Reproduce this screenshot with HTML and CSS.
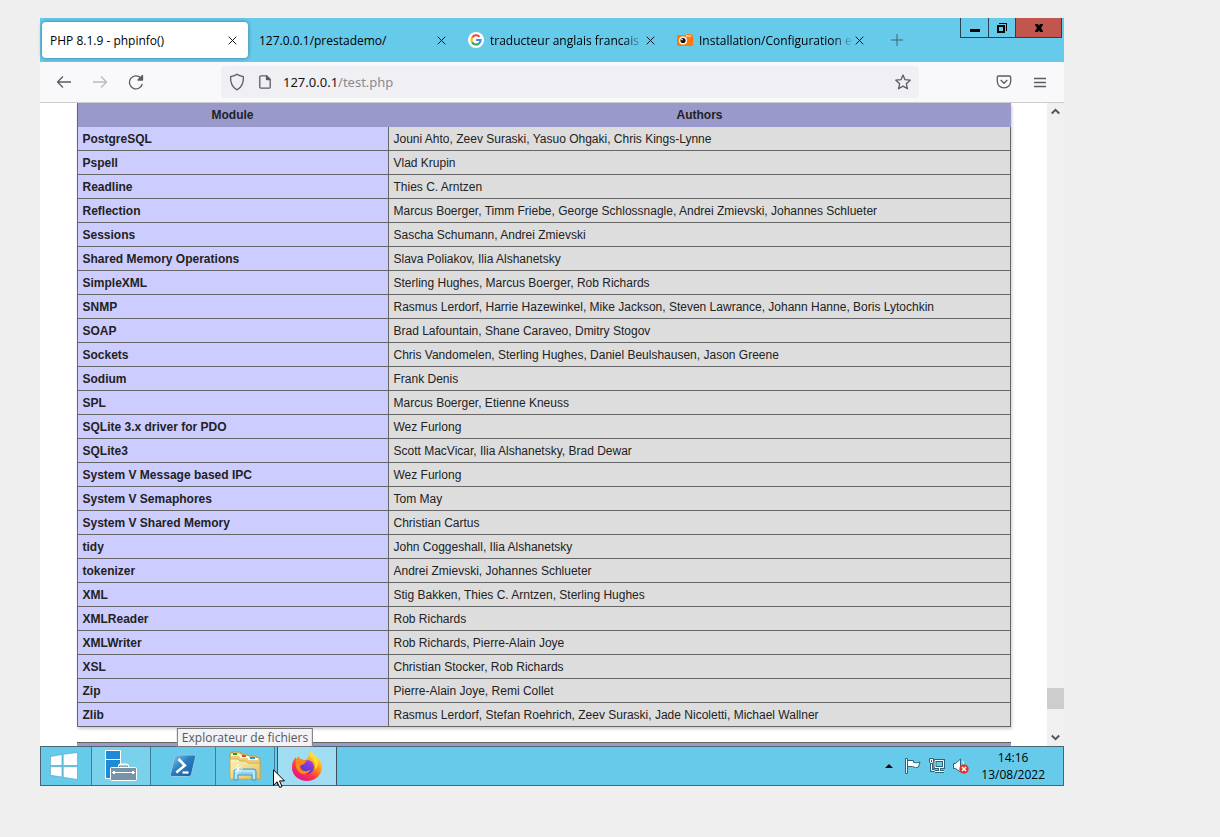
FILE: index.html
```html
<!DOCTYPE html>
<html lang="fr">
<head>
  <meta charset="UTF-8">
  <meta name="viewport" content="width=device-width, initial-scale=1.0">
  <title>PHP 8.1.9 - phpinfo()</title>
  <link rel="stylesheet" href="styles.css">
</head>
<body>
  <div class="desktop">
    <header class="tab-strip">
      <div class="tabs">
        <div class="tab active">
          <button type="button" class="tab-label">PHP 8.1.9 - phpinfo()</button>
          <button type="button" class="tab-close" aria-label="Fermer l'onglet"><svg width="9" height="9" viewBox="0 0 9 9"><path d="M.7.7l7.6 7.6M8.3.7L.7 8.3"/></svg></button>
        </div>
        <div class="tab">
          <button type="button" class="tab-label">127.0.0.1/prestademo/</button>
          <button type="button" class="tab-close" aria-label="Fermer l'onglet"><svg width="9" height="9" viewBox="0 0 9 9"><path d="M.7.7l7.6 7.6M8.3.7L.7 8.3"/></svg></button>
        </div>
        <div class="tab">
          <svg class="tab-icon" width="16" height="16" viewBox="0 0 16 16">
            <circle cx="8" cy="8" r="8" fill="#fff"/>
            <g fill="none" stroke-width="2.1">
              <path d="M4.2 5.6A4.6 4.6 0 0 1 11.5 4.7" stroke="#ea4335"/>
              <path d="M4.2 5.6A4.8 4.8 0 0 0 4.2 10.4" stroke="#fbbc05"/>
              <path d="M4.2 10.4A4.6 4.6 0 0 0 10.9 11.6" stroke="#34a853"/>
              <path d="M10.9 11.6A4.6 4.6 0 0 0 12.6 8H8.1" stroke="#4285f4"/>
            </g>
          </svg>
          <button type="button" class="tab-label fade">traducteur anglais francais - F</button>
          <button type="button" class="tab-close" aria-label="Fermer l'onglet"><svg width="9" height="9" viewBox="0 0 9 9"><path d="M.7.7l7.6 7.6M8.3.7L.7 8.3"/></svg></button>
        </div>
        <div class="tab">
          <svg class="tab-icon" width="16" height="16" viewBox="0 0 16 16">
            <path d="M1 3h8l1-1h4v1h1q1 0 1 1v9q0 1-1 1H1q-1 0-1-1V4q0-1 1-1z" fill="#ff7a0a"/>
            <path d="M9 4h5" stroke="#fff"/>
            <circle cx="6" cy="8.5" r="4" fill="#fff"/>
            <circle cx="6" cy="8.5" r="2.6" fill="#111"/>
            <circle cx="5" cy="7.6" r=".8" fill="#fff"/>
          </svg>
          <button type="button" class="tab-label fade">Installation/Configuration et j</button>
          <button type="button" class="tab-close" aria-label="Fermer l'onglet"><svg width="9" height="9" viewBox="0 0 9 9"><path d="M.7.7l7.6 7.6M8.3.7L.7 8.3"/></svg></button>
        </div>
        <button type="button" class="new-tab" aria-label="Nouvel onglet"><svg width="12" height="12" viewBox="0 0 12 12"><path d="M6 0v12M0 6h12"/></svg></button>
      </div>
      <div class="window-controls">
        <button type="button" class="window-btn" aria-label="Réduire"><svg width="12" height="12" viewBox="0 0 12 12"><path d="M1 7h10v3H1z"/></svg></button>
        <button type="button" class="window-btn" aria-label="Restaurer"><svg width="12" height="12" viewBox="0 0 12 12"><path d="M1 3h8v8H1zM3 5v4h4V5z" fill-rule="evenodd"/><path d="M3 1h8v8h-1V2H3z"/></svg></button>
        <button type="button" class="window-btn close" aria-label="Fermer"><svg width="12" height="12" viewBox="0 0 12 12"><path d="M2 2h3l1 1.700L7 2h3v1L8 6l2 3v1H7L6 8.300 5 10H2V9l2-3-2-3z"/></svg></button>
      </div>
    </header>

    <nav class="toolbar">
      <div class="toolbar-group">
        <button type="button" class="tool-btn" aria-label="Reculer"><svg width="16" height="16" viewBox="0 0 16 16"><path d="M15 8H1.5M7 2.5L1.5 8 7 13.5"/></svg></button>
        <button type="button" class="tool-btn" aria-label="Avancer" disabled><svg width="16" height="16" viewBox="0 0 16 16"><path d="M1 8h13.5M9 2.5L14.5 8 9 13.5"/></svg></button>
        <button type="button" class="tool-btn" aria-label="Actualiser"><svg width="16" height="16" viewBox="0 0 16 16"><path d="M12.600 3.800A6.500 6.500 0 1 0 14.300 10"/><path class="solid" d="M14.500 1.500v4.500H10z"/></svg></button>
      </div>
      <form class="url-bar" action="test.php">
        <svg width="16" height="18" viewBox="0 0 16 18"><path d="M8 1.200C6.500 2.400 4 3.200 1.600 3.700 1.300 9.500 3 14.200 8 16.800 13 14.200 14.700 9.500 14.400 3.700 12 3.200 9.500 2.400 8 1.200z"/></svg>
        <svg class="page-icon" width="12" height="14" viewBox="0 0 12 14"><path d="M2 .8h5.500L11.200 4.500V12q0 1.200-1.200 1.200H2Q.8 13.200.8 12V2Q.8.8 2 .8z"/><path class="solid" d="M7.500 1v3.500H11z"/></svg>
        <label class="url-text">127.0.0.1<input type="text" class="url-input" name="path" value="/test.php" aria-label="Adresse"></label>
        <button type="button" class="star-btn" aria-label="Marquer cette page"><svg width="16" height="16" viewBox="0 0 16 16"><path d="M8 1l2 4.700 5.200.5-3.900 3.500 1.200 5.100L8 12.100l-4.500 2.700 1.200-5.100L.8 6.200 6 5.700z"/></svg></button>
      </form>
      <div class="toolbar-group">
        <button type="button" class="tool-btn" aria-label="Pocket"><svg width="16" height="16" viewBox="0 0 16 16"><path d="M2.500 2h11q1.200 0 1.200 1.200V7.500a6.700 6.300 0 0 1-13.400 0V3.200Q1.300 2 2.500 2zM4.700 6L8 9.200 11.300 6"/></svg></button>
        <button type="button" class="tool-btn" aria-label="Menu"><svg width="12" height="11" viewBox="0 0 12 11"><path d="M0 1.500h12M0 5.500h12M0 9.500h12"/></svg></button>
      </div>
    </nav>

    <div class="viewport">
      <main class="page">
        <table class="authors">
          <thead>
            <tr><th>Module</th><th>Authors</th></tr>
          </thead>
          <tbody>
            <tr><td class="e">PostgreSQL</td><td class="v">Jouni Ahto, Zeev Suraski, Yasuo Ohgaki, Chris Kings-Lynne</td></tr>
            <tr><td class="e">Pspell</td><td class="v">Vlad Krupin</td></tr>
            <tr><td class="e">Readline</td><td class="v">Thies C. Arntzen</td></tr>
            <tr><td class="e">Reflection</td><td class="v">Marcus Boerger, Timm Friebe, George Schlossnagle, Andrei Zmievski, Johannes Schlueter</td></tr>
            <tr><td class="e">Sessions</td><td class="v">Sascha Schumann, Andrei Zmievski</td></tr>
            <tr><td class="e">Shared Memory Operations</td><td class="v">Slava Poliakov, Ilia Alshanetsky</td></tr>
            <tr><td class="e">SimpleXML</td><td class="v">Sterling Hughes, Marcus Boerger, Rob Richards</td></tr>
            <tr><td class="e">SNMP</td><td class="v">Rasmus Lerdorf, Harrie Hazewinkel, Mike Jackson, Steven Lawrance, Johann Hanne, Boris Lytochkin</td></tr>
            <tr><td class="e">SOAP</td><td class="v">Brad Lafountain, Shane Caraveo, Dmitry Stogov</td></tr>
            <tr><td class="e">Sockets</td><td class="v">Chris Vandomelen, Sterling Hughes, Daniel Beulshausen, Jason Greene</td></tr>
            <tr><td class="e">Sodium</td><td class="v">Frank Denis</td></tr>
            <tr><td class="e">SPL</td><td class="v">Marcus Boerger, Etienne Kneuss</td></tr>
            <tr><td class="e">SQLite 3.x driver for PDO</td><td class="v">Wez Furlong</td></tr>
            <tr><td class="e">SQLite3</td><td class="v">Scott MacVicar, Ilia Alshanetsky, Brad Dewar</td></tr>
            <tr><td class="e">System V Message based IPC</td><td class="v">Wez Furlong</td></tr>
            <tr><td class="e">System V Semaphores</td><td class="v">Tom May</td></tr>
            <tr><td class="e">System V Shared Memory</td><td class="v">Christian Cartus</td></tr>
            <tr><td class="e">tidy</td><td class="v">John Coggeshall, Ilia Alshanetsky</td></tr>
            <tr><td class="e">tokenizer</td><td class="v">Andrei Zmievski, Johannes Schlueter</td></tr>
            <tr><td class="e">XML</td><td class="v">Stig Bakken, Thies C. Arntzen, Sterling Hughes</td></tr>
            <tr><td class="e">XMLReader</td><td class="v">Rob Richards</td></tr>
            <tr><td class="e">XMLWriter</td><td class="v">Rob Richards, Pierre-Alain Joye</td></tr>
            <tr><td class="e">XSL</td><td class="v">Christian Stocker, Rob Richards</td></tr>
            <tr><td class="e">Zip</td><td class="v">Pierre-Alain Joye, Remi Collet</td></tr>
            <tr><td class="e">Zlib</td><td class="v">Rasmus Lerdorf, Stefan Roehrich, Zeev Suraski, Jade Nicoletti, Michael Wallner</td></tr>
          </tbody>
        </table>
        <div class="next-section"></div>
      </main>
      <div class="scrollbar">
        <button type="button" class="scroll-btn" aria-label="Défiler vers le haut"><svg width="9" height="7" viewBox="0 0 9 7"><path d="M.8 5.500L4.500 1.800 8.200 5.500"/></svg></button>
        <div class="thumb"></div>
        <button type="button" class="scroll-btn" aria-label="Défiler vers le bas"><svg width="9" height="7" viewBox="0 0 9 7"><path d="M.8 1.500L4.500 5.200 8.200 1.500"/></svg></button>
      </div>
    </div>

    <footer class="taskbar">
      <button type="button" class="task start" aria-label="Démarrer">
        <svg width="28" height="28" viewBox="0 0 28 28"><path d="M.5 4.500L12 2.500V13.500H.5zM13.200 2.300L27.500.5V13.500H13.200zM.5 14.700H12V25L.5 23.300zM13.200 14.700H27.500V27.500L13.200 25.300z" fill="#fff" stroke="#4f9fbd" stroke-width=".6"/></svg>
      </button>
      <button type="button" class="task open" aria-label="Gestionnaire de serveur">
        <svg width="34" height="34" viewBox="0 0 34 34">
          <path d="M1.500 1.500h15v28h-15z" fill="#1e8ad6" stroke="#fff"/>
          <path d="M1 10.500h16" stroke="#fff"/>
          <path d="M15.500 19v-2q0-1 1-1h6q1 0 1 1v2" fill="none" stroke="#fff" stroke-width="3"/>
          <path d="M15.500 19v-2h8v2" fill="none" stroke="#5c7b8d"/>
          <rect x="6.500" y="18.500" width="26" height="13" rx="1" fill="#7693a7" stroke="#fff"/>
          <path d="M8 23.500h23" stroke="#fff"/>
          <path d="M10 22v3M29 22v3" stroke="#fff" stroke-width="2"/>
        </svg>
      </button>
      <button type="button" class="task shell" aria-label="Windows PowerShell">
        <svg width="28" height="24" viewBox="0 0 28 24">
          <defs><linearGradient id="ps" x1="0" y1="0" x2="1" y2="1"><stop offset="0" stop-color="#8fd0ef"/><stop offset=".45" stop-color="#2b7fc1"/><stop offset="1" stop-color="#155a9e"/></linearGradient></defs>
          <path d="M7.500 1h17.500q2 0 1.600 2l-4.200 17.500q-.5 2-2.500 2H3q-2 0-1.600-2L5.500 3q.4-2 2-2z" fill="url(#ps)" stroke="#8ccbe8"/>
          <path d="M9.500 5l6.300 6.500L7.300 18.500" fill="none" stroke="#fff" stroke-width="2.600"/>
          <path d="M13.500 18.500h6" stroke="#fff" stroke-width="2.200"/>
        </svg>
      </button>
      <div class="explorer">
        <button type="button" class="task open" aria-label="Explorateur de fichiers" aria-describedby="tip">
          <svg width="32" height="32" viewBox="0 0 32 32">
            <defs><linearGradient id="fold" x1="0" y1="0" x2="1" y2="1"><stop offset="0" stop-color="#fff4bd"/><stop offset="1" stop-color="#e5bf5c"/></linearGradient></defs>
            <path d="M1 29V4q0-1 1-1h1l1-1h7l1 2h6l1 2h8l1 2h2q1 0 1 1v20z" fill="#edce78" stroke="#c39a3e"/>
            <path d="M2 5h9l1 2h7l1 2h9" fill="none" stroke="#fffbe0" stroke-width="2"/>
            <path d="M4 3h4v2H4z" fill="#17a62c"/><path d="M13 5h4v2h-4z" fill="#d94632"/><path d="M21 7h5v2h-5z" fill="#2595df"/>
            <path d="M1 29V10q0-1 1-1h7l2 2h6l2 2h11q1 0 1 1v15z" fill="url(#fold)" stroke="#d6ae50"/>
            <path d="M5 30V21q0-2 2-2h18q2 0 2 2v9h-4v-5H9v5z" fill="#92d4ef" stroke="#3f9cc9"/>
            <path d="M7 29v-8h18v8" fill="none" stroke="#def5ff"/>
            <path d="M9 14v10M4 19h10M6 16l6 6M12 16l-6 6" stroke="#fff" stroke-width=".8"/>
          </svg>
        </button>
        <div class="tooltip" id="tip" role="tooltip">Explorateur de fichiers</div>
        <svg class="cursor" width="12" height="19" viewBox="0 0 12 19"><path d="M.5.8v15.500l3.600-3.500 2.600 5.700 2.300-1-2.500-5.600h5z" fill="#fff" stroke="#000"/></svg>
      </div>
      <button type="button" class="task focused" aria-label="Firefox">
        <svg width="32" height="32" viewBox="0 0 32 32">
          <defs>
            <linearGradient id="fx" x1=".85" y1=".05" x2=".25" y2=".95"><stop offset="0" stop-color="#fff44f"/><stop offset=".4" stop-color="#ff980e"/><stop offset=".7" stop-color="#ff3647"/><stop offset="1" stop-color="#e31587"/></linearGradient>
            <linearGradient id="globe" x1=".7" y1="0" x2=".3" y2="1"><stop offset="0" stop-color="#a43bf0"/><stop offset="1" stop-color="#4a3bb8"/></linearGradient>
          </defs>
          <path d="M20 1c1.500 2 3.500 3.500 5 6l1.500 2 .8-1c2.500 3 3.700 6 3.400 10.500C30 26 24 31 16 31S1 25.500 1 17.500c0-4.500 1.500-8 4-10.500l.5 2.500L8 6l1 3.500 6 .5 2-3z" fill="url(#fx)"/>
          <circle cx="16" cy="17" r="7" fill="url(#globe)"/>
          <path d="M5 10c3-2 5-1.500 7 0l4 .5-3 3.500-4 1.500c0 4 3.500 6.500 7.500 5.500l3-1.500c-1.500 4-6.500 6-10.500 3.500C5 20 3.500 14 5 10z" fill="#ff8a16"/>
          <path d="M20 1c-3 4 0 7 2.500 9.500 2 2.500 2.500 6 1 9 4-3 4.500-8 2-12.500C24 5 21 3.500 20 1z" fill="#ffdc3d"/>
        </svg>
      </button>
      <div class="tray">
        <button type="button" class="tray-btn small" aria-label="Icônes cachées"><svg width="8" height="4" viewBox="0 0 8 4"><path d="M4 0l4 4H0z" fill="#111"/></svg></button>
        <button type="button" class="tray-btn" aria-label="Centre de maintenance"><svg width="16" height="16" viewBox="0 0 16 16"><path d="M3 2.500h5.500v1.800q3 1.200 6.500-.3l-1.500 5q-3 1.500-6-.5H3" fill="#fff" stroke="#2f6478"/><path d="M.5.500h2v15h-2z" fill="#fff" stroke="#2f6478"/></svg></button>
        <button type="button" class="tray-btn" aria-label="Réseau"><svg width="16" height="16" viewBox="0 0 16 16"><g fill="none" stroke="#2f6478" stroke-width="3"><path d="M6 2.500h8.500v7H6zM10.500 10v3M6 13.500h9M2.500 5v7.500h3"/></g><g fill="none" stroke="#fff"><path d="M6 2.500h8.500v7H6zM10.500 10v3.500M6 13.500h9M2.500 5v7.500h3"/></g><path d="M.5.500h4V4l-1 1.500h-2L.5 4z" fill="#fff" stroke="#2f6478"/><path d="M2.500 2v2" stroke="#2f6478"/></svg></button>
        <button type="button" class="tray-btn" aria-label="Volume"><svg width="16" height="16" viewBox="0 0 16 16"><path d="M.5 5.500h2L7.500 1v13L2.500 10.500h-2z" fill="#fff" stroke="#2f6478"/><path d="M9.500 3q1.500 2 1 4" fill="none" stroke="#fff"/><circle cx="11" cy="11" r="4.700" fill="#e0352b"/><path d="M9 9l4 4M13 9l-4 4" stroke="#fff" stroke-width="1.600"/></svg></button>
        <time class="clock" datetime="2022-08-13T14:16">14:16<br>13/08/2022</time>
      </div>
    </footer>
  </div>
</body>
</html>
```

FILE: styles.css
```css
* {
  margin: 0;
  padding: 0;
  box-sizing: border-box;
}

body {
  background-color: #efefef;
  padding: 18px 156px 51px 40px;
  font-family: "Open Sans", "Noto Sans", sans-serif;
  font-size: 12px;
  color: #000;
}

button,
input {
  font: inherit;
  color: inherit;
  background: none;
  border: none;
}

svg {
  display: block;
  flex-shrink: 0;
}

.desktop {
  display: flex;
  flex-direction: column;
}

/* Tabs */
.tab-strip {
  display: flex;
  justify-content: space-between;
  align-items: flex-start;
  background-color: #66caea;
  padding-right: 2px;
}

.tabs {
  display: flex;
  align-items: center;
  gap: 3px;
  padding: 4px 2px;
  min-width: 0;
}

.tab {
  display: flex;
  align-items: center;
  width: 206px;
  height: 36px;
  padding: 0 10px 0 8px;
  border-radius: 4px;
  min-width: 0;
}

.tab.active {
  background-color: #fff;
  box-shadow: 0 0 4px rgba(0, 0, 0, 0.4);
}

.tab-icon {
  margin-right: 6px;
}

.tab-label {
  flex: 1;
  min-width: 0;
  text-align: left;
  white-space: nowrap;
}

.tab-label.fade {
  -webkit-mask-image: linear-gradient(to left, transparent, #000 20px);
  mask-image: linear-gradient(to left, transparent, #000 20px);
}

.tab-close {
  display: flex;
  align-items: center;
  justify-content: center;
  width: 12px;
  height: 16px;
}

.tab-close svg,
.new-tab svg {
  fill: none;
  stroke: #15141a;
}

.new-tab {
  display: flex;
  align-items: center;
  justify-content: center;
  width: 38px;
  height: 36px;
}

.new-tab svg {
  stroke: #44616d;
}

.window-controls {
  display: flex;
  border: 1px solid #26424d;
  border-top: none;
}

.window-btn {
  display: flex;
  align-items: center;
  justify-content: center;
  width: 27px;
  height: 19px;
}

.window-btn + .window-btn {
  border-left: 1px solid #26424d;
}

.window-btn.close {
  width: 46px;
  background-color: #c1564e;
}

/* Toolbar */
.toolbar {
  display: flex;
  align-items: center;
  gap: 67px;
  padding: 4px 6px;
  background-color: #f9f9fb;
  border-bottom: 1px solid #ccc;
}

.toolbar-group {
  display: flex;
}

.tool-btn {
  display: flex;
  align-items: center;
  justify-content: center;
  width: 36px;
  height: 32px;
}

.tool-btn:disabled {
  opacity: 0.4;
}

.toolbar svg {
  fill: none;
  stroke: #5b5b66;
  stroke-width: 1.3;
  stroke-linejoin: round;
}

.toolbar .solid {
  fill: #5b5b66;
}

.url-bar {
  flex: 1;
  display: flex;
  align-items: center;
  height: 32px;
  padding: 0 8px;
  background-color: #f0f0f4;
  border-radius: 4px;
}

.page-icon {
  margin: 0 12px 0 14px;
}

.url-text {
  flex: 1;
  display: flex;
  font-family: "Noto Sans", "Open Sans", sans-serif;
  font-size: 13px;
  color: #15141a;
}

.url-input {
  flex: 1;
  min-width: 0;
  color: #8a8a90;
}

/* phpinfo page */
.viewport {
  display: flex;
}

.page {
  flex: 1;
  background-color: #fff;
  color: #222;
  font-family: "Liberation Sans", Arial, sans-serif;
  overflow: hidden;
}

.authors {
  width: 934px;
  max-width: 100%;
  margin: 0 auto;
  border-collapse: separate;
  border-spacing: 0;
  table-layout: fixed;
  box-shadow: 1px 2px 3px #ccc;
}

.authors th,
.authors td {
  height: 24px;
  padding: 0 5px;
  border-left: 1px solid #666;
  line-height: 16px;
}

.authors th {
  background-color: #99c;
}

.authors th + th {
  border-left-color: #99c;
}

.authors td {
  border-bottom: 1px solid #666;
}

.authors td:last-child {
  border-right: 1px solid #666;
}

.authors th:first-child {
  width: 311px;
}

.e {
  background-color: #ccf;
  font-weight: bold;
}

.v {
  background-color: #ddd;
}

.next-section {
  width: 934px;
  max-width: 100%;
  height: 4px;
  margin: 15px auto 0;
  background-color: #99c;
  border-top: 1px solid #666;
}

.scrollbar {
  display: flex;
  flex-direction: column;
  width: 17px;
  background-color: #f0f0f0;
}

.scroll-btn {
  display: flex;
  align-items: center;
  justify-content: center;
  height: 17px;
}

.scroll-btn svg {
  fill: none;
  stroke: #555;
  stroke-width: 2;
}

.thumb {
  height: 21px;
  margin: auto 0 20px;
  background-color: #cdcdcd;
}

/* Taskbar */
.taskbar {
  display: flex;
  height: 40px;
  background-color: #66caea;
  border: 1px solid #4a6570;
}

.task {
  display: flex;
  align-items: center;
  justify-content: center;
  width: 60px;
  height: 38px;
}

.task.start {
  width: 50px;
  padding-right: 4px;
}

.task.open {
  background-color: #79d1ec;
  border: 1px solid #3d7f96;
  border-width: 0 1px;
}

.task.shell {
  width: 64px;
}

.task.focused {
  margin-left: 2px;
  background-color: #a1ddf2;
  border: 1px solid #3a525c;
  border-width: 0 1px;
}

.explorer {
  position: relative;
}

.explorer .task {
  background-color: #66caea;
}

.tooltip {
  position: absolute;
  bottom: 100%;
  left: 50%;
  transform: translateX(-50%);
  padding: 0 4px;
  background-color: #f2f2f7;
  border: 1px solid #767676;
  color: #575757;
  line-height: 17px;
  white-space: nowrap;
}

.cursor {
  position: absolute;
  top: 22px;
  left: 58px;
  z-index: 1;
}

.tray {
  display: flex;
  align-items: center;
  gap: 8px;
  margin-left: auto;
  padding-right: 18px;
}

.tray-btn {
  width: 16px;
}

.tray-btn.small {
  width: 12px;
}

.clock {
  margin-left: 4px;
  line-height: 17px;
  text-align: center;
}
```
